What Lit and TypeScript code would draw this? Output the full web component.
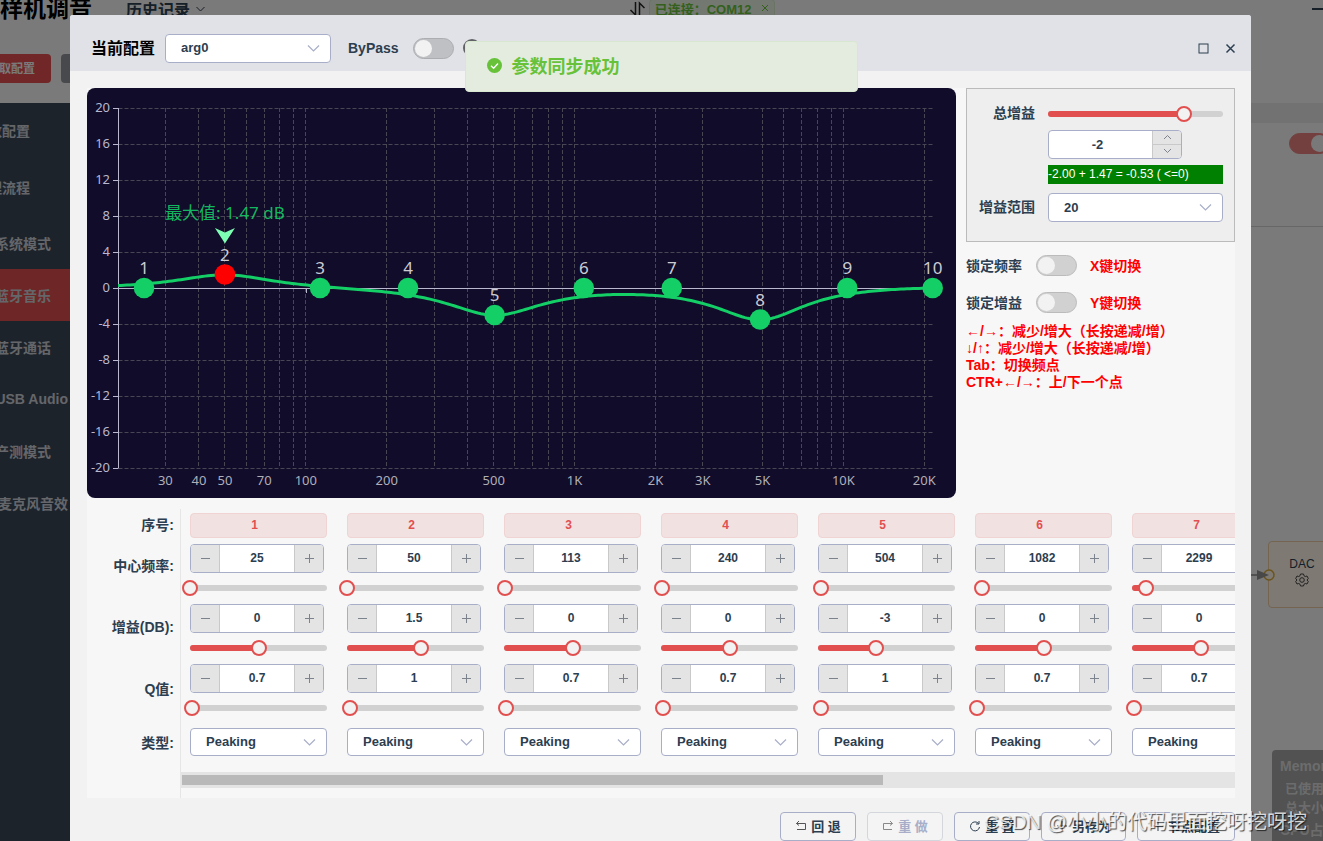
import { LitElement, html, svg, css } from "lit";
import { customElement, property } from "lit/decorators.js";
import { classMap } from "lit/directives/class-map.js";

interface Band {
  freq: number;
  gain: number;
  q: number;
}

const BANDS: Band[] = [
  { freq: 25, gain: 0, q: 0.7 },
  { freq: 50, gain: 1.5, q: 1 },
  { freq: 113, gain: 0, q: 0.7 },
  { freq: 240, gain: 0, q: 0.7 },
  { freq: 504, gain: -3, q: 1 },
  { freq: 1082, gain: 0, q: 0.7 },
  { freq: 2299, gain: 0, q: 0.7 },
  { freq: 4900, gain: -3.5, q: 1 },
  { freq: 10340, gain: 0, q: 0.7 },
  { freq: 21500, gain: 0, q: 0.7 },
];

const SAMPLE_RATE = 48000;

/** Magnitude in dB of one peaking filter at frequency f. */
function peakingDb(band: Band, f: number): number {
  if (!band.gain) return 0;
  const a = Math.pow(10, band.gain / 40);
  const w =
    Math.tan((Math.PI * f) / SAMPLE_RATE) /
    Math.tan((Math.PI * band.freq) / SAMPLE_RATE);
  const re = 1 - w * w;
  const num = re * re + Math.pow((w * a) / band.q, 2);
  const den = re * re + Math.pow(w / (a * band.q), 2);
  return 10 * Math.log10(num / den);
}

const chevron = svg`<path d="M1 1.5 L6.5 7 L12 1.5" fill="none" stroke="currentColor" stroke-width="1.2"/>`;

const shared = css`
  * {
    box-sizing: border-box;
  }
  button,
  input,
  select {
    font: inherit;
    color: inherit;
    margin: 0;
  }
  button {
    cursor: pointer;
  }
`;

@customElement("eq-slider")
export class EqSlider extends LitElement {
  @property() label = "";
  @property({ type: Number }) percent = 0;

  static styles = [
    shared,
    css`
      :host {
        display: grid;
        align-items: center;
        height: 16px;
      }
      .track {
        grid-area: 1 / 1;
        height: 6px;
        border-radius: 3px;
        background: #d1d1d1;
        overflow: hidden;
      }
      .fill {
        height: 100%;
        background: #e24f4f;
      }
      .range {
        grid-area: 1 / 1;
        appearance: none;
        background: none;
        height: 16px;
        width: calc(100% + 16px);
        margin: 0 -8px;
      }
      .range::-webkit-slider-thumb {
        appearance: none;
        box-sizing: border-box;
        width: 16px;
        height: 16px;
        border: 2px solid #e24f4f;
        border-radius: 50%;
        background: #f2f2f2;
      }
    `,
  ];

  render() {
    return html`
      <div class="track"><div class="fill" style="width:${this.percent}%"></div></div>
      <input class="range" type="range" min="0" max="100" step="any"
        .value=${String(this.percent)} aria-label=${this.label} />
    `;
  }
}

@customElement("eq-number")
export class EqNumber extends LitElement {
  @property() label = "";
  @property() value = "";
  @property({ type: Boolean }) stacked = false;

  static styles = [
    shared,
    css`
      :host {
        display: block;
      }
      .box {
        display: grid;
        grid-template-columns: 29px 1fr 29px;
        height: 29px;
        border: 1px solid #a8aec8;
        border-radius: 4px;
        background: #fff;
        overflow: hidden;
      }
      .box.stacked {
        grid-template-columns: 1fr 29px;
      }
      .field {
        width: 100%;
        min-width: 0;
        border: 0;
        padding: 0 0 2px;
        background: none;
        text-align: center;
        outline: none;
      }
      .stacked .field {
        padding: 0 6px 1px 0;
      }
      .step {
        display: grid;
        place-items: center;
        border: 0;
        padding: 0;
        background: #e4e4e4;
        color: #7d838c;
      }
      .minus {
        border-right: 1px solid #c9c9c9;
      }
      .plus {
        border-left: 1px solid #c9c9c9;
      }
      .pair {
        display: grid;
        grid-template-rows: 1fr 1fr;
        border-left: 1px solid #c9c9c9;
      }
      .up {
        border-bottom: 1px solid #c9c9c9;
      }
    `,
  ];

  render() {
    const field = html`<input class="field" type="text" inputmode="decimal"
      .value=${this.value} aria-label=${this.label} />`;
    if (this.stacked) {
      return html`<div class="box stacked">
        ${field}
        <div class="pair">
          <button class="step up" type="button" aria-label="增加">
            <svg width="9" height="6" viewBox="0 0 9 6"><path d="M1 5 L4.500 1.500 L8 5" fill="none" stroke="currentColor"/></svg>
          </button>
          <button class="step" type="button" aria-label="减少">
            <svg width="9" height="6" viewBox="0 0 9 6"><path d="M1 1 L4.500 4.500 L8 1" fill="none" stroke="currentColor"/></svg>
          </button>
        </div>
      </div>`;
    }
    return html`<div class="box">
      <button class="step minus" type="button" aria-label="减少">
        <svg width="9" height="9" viewBox="0 0 9 9"><path d="M0 4.500 H9" stroke="currentColor"/></svg>
      </button>
      ${field}
      <button class="step plus" type="button" aria-label="增加">
        <svg width="9" height="9" viewBox="0 0 9 9"><path d="M0 4.500 H9 M4.500 0 V9" stroke="currentColor"/></svg>
      </button>
    </div>`;
  }
}

@customElement("eq-select")
export class EqSelect extends LitElement {
  @property() label = "";
  @property({ type: Array }) options: string[] = [];

  static styles = [
    shared,
    css`
      :host {
        display: grid;
        align-items: center;
        height: 29px;
      }
      .control {
        grid-area: 1 / 1;
        appearance: none;
        width: 100%;
        height: 100%;
        padding: 0 30px 1px 15px;
        border: 1px solid #a8aec8;
        border-radius: 4px;
        background: #fff;
        outline: none;
      }
      .arrow {
        grid-area: 1 / 1;
        justify-self: end;
        margin-right: 11px;
        color: #a8aec8;
        pointer-events: none;
      }
    `,
  ];

  render() {
    return html`
      <select class="control" aria-label=${this.label}>
        ${this.options.map((o) => html`<option>${o}</option>`)}
      </select>
      <svg class="arrow" width="13" height="9" viewBox="0 0 13 9">${chevron}</svg>
    `;
  }
}

@customElement("eq-chart")
export class EqChart extends LitElement {
  static styles = css`
    :host {
      display: block;
      background: #100c2a;
      border-radius: 8px;
      overflow: hidden;
    }
    .plot {
      display: block;
      width: 100%;
      height: auto;
      font-family: "Noto Sans", "Noto Sans CJK SC", sans-serif;
      font-weight: 400;
    }
    .grid {
      stroke: #484653;
      stroke-dasharray: 4 2;
    }
    .axis {
      stroke: #b9b8ce;
    }
    .y-label {
      font-size: 13px;
      fill: #b9b8ce;
      text-anchor: end;
    }
    .x-label {
      font-size: 13px;
      fill: #b0afb8;
      text-anchor: middle;
    }
    .curve {
      fill: none;
      stroke: #14ce66;
      stroke-width: 3;
    }
    .dot {
      fill: #14ce66;
    }
    .dot-active {
      fill: #ff0000;
    }
    .dot-label {
      font-size: 17px;
      fill: #cccbd2;
      text-anchor: middle;
    }
    .peak {
      font-size: 17px;
      fill: #14ce66;
      fill-opacity: 0.9;
      text-anchor: middle;
    }
    .marker {
      fill: #7cffb2;
    }
  `;

  private x(f: number) {
    return 31 + 268.75 * Math.log10(f / 20);
  }

  private y(db: number) {
    return 200 - 9 * db;
  }

  private curve() {
    const right = this.x(21500);
    const parts: string[] = [];
    for (let px = 31; px <= right; px += 3) {
      const f = 20 * Math.pow(10, (px - 31) / 268.75);
      const db = BANDS.reduce((sum, b) => sum + peakingDb(b, f), 0);
      parts.push(`${px.toFixed(1)} ${this.y(db).toFixed(2)}`);
    }
    return "M" + parts.join(" L");
  }

  render() {
    const dbs = [20, 16, 12, 8, 4, 0, -4, -8, -12, -16, -20];
    const freqs = [
      30, 40, 50, 60, 70, 80, 90, 100, 200, 300, 400, 500, 600, 700, 800, 900,
      1000, 2000, 3000, 5000, 6000, 7000, 8000, 9000, 10000, 20000,
    ];
    const named = [30, 40, 50, 70, 100, 200, 500, 1000, 2000, 3000, 5000, 10000, 20000];
    const crisp = (v: number) => Math.round(v - 0.5) + 0.5;
    const peakX = this.x(50);
    return html`<svg class="plot" viewBox="0 0 869 410" role="img" aria-label="EQ">
      ${dbs.map((d) => svg`<path class="grid" d="M31.5 ${crisp(this.y(d))} H847"/>`)}
      ${freqs.map((f) => svg`<path class="grid" d="M${crisp(this.x(f))} 20 V380"/>`)}
      <path class="axis" d="M31.500 20 V380 M31.500 200.500 H847 M219.500 200 V205" fill="none"/>
      ${dbs.map((d) => svg`
        <path class="axis" d="M26 ${crisp(this.y(d))} H31.5"/>
        <text class="y-label" x="23" y=${this.y(d) + 4}>${d}</text>`)}
      ${named.map((f) => svg`
        <text class="x-label" x=${this.x(f)} y="397">${f >= 1000 ? f / 1000 + "K" : f}</text>`)}
      <path class="curve" d=${this.curve()}/>
      ${BANDS.map((b, i) => svg`
        <circle class=${i === 1 ? "dot-active" : "dot"} cx=${this.x(b.freq)} cy=${this.y(b.gain)} r="10.300"/>
        <text class="dot-label" x=${this.x(b.freq)} y=${this.y(b.gain) - 14}>${i + 1}</text>`)}
      <path class="marker" d="M${peakX} 155.500 L${peakX - 10} 140 L${peakX} 144.500 L${peakX + 10} 140 Z"/>
      <text class="peak" x=${peakX} y="131">最大值: 1.47 dB</text>
    </svg>`;
  }
}

@customElement("app-root")
export class AppRoot extends LitElement {
  static styles = [
    shared,
    css`
      :host {
        display: block;
        position: relative;
        height: 100vh;
        overflow: hidden;
        font-family: "Liberation Sans", "Noto Sans CJK SC", sans-serif;
        font-size: 14px;
        font-weight: 700;
        color: #2c3e50;
        background: #f4f4f4;
      }

      /* page behind the dialog */
      .shell {
        display: flex;
        flex-direction: column;
        height: 100%;
        margin-left: -40px;
      }
      .top {
        flex: none;
        height: 103px;
        padding-left: 40px;
      }
      .bar {
        display: flex;
        align-items: center;
        height: 18px;
        white-space: nowrap;
      }
      .brand {
        width: 126px;
        margin: 0;
        font-size: 23px;
        line-height: 20px;
        color: #000;
      }
      .history {
        display: flex;
        align-items: center;
        gap: 6px;
        width: 38%;
        font-size: 16px;
      }
      .link {
        display: flex;
        align-items: center;
        flex: 1;
        gap: 4px;
      }
      .tag {
        display: flex;
        align-items: center;
        gap: 10px;
        height: 20px;
        padding: 0 6px 2px 5px;
        border: 1px solid #d3e8c8;
        border-radius: 4px;
        background: #e6f2e0;
        color: #67c23a;
        font-size: 13px;
      }
      .window {
        margin-left: auto;
        width: 11px;
        height: 2px;
        background: #2c3e50;
      }
      .tools {
        display: flex;
        gap: 10px;
        margin: 36px 0 0 -40px;
      }
      .tool {
        width: 91px;
        height: 29px;
        border: 0;
        border-radius: 4px;
        padding: 0 16px 3px 0;
        text-align: right;
        background: #e24f4f;
        color: #f4f4f4;
        font-size: 12px;
      }
      .tool.grey {
        background: #909399;
      }
      .columns {
        display: flex;
        flex: 1;
        min-height: 0;
      }
      .side {
        width: 180px;
        background: #3b4654;
        color: #c8ccd4;
      }
      .item {
        display: flex;
        align-items: center;
        justify-content: flex-end;
        height: 52px;
        padding-right: 89px;
        padding-bottom: 1px;
        color: inherit;
        text-decoration: none;
        white-space: nowrap;
      }
      .item.head {
        height: 57px;
        padding-right: 110px;
        padding-bottom: 4px;
      }
      .item.active {
        background: #dc4c4c;
      }
      .item.wide {
        padding-right: 72px;
      }
      .work {
        display: flex;
        flex-direction: column;
        flex: 1;
      }
      .strip {
        height: 20px;
        background: #e4e4e4;
      }
      .option {
        display: flex;
        justify-content: flex-end;
        height: 104px;
        padding-top: 10px;
        border-bottom: 1px solid #cfcfcf;
      }
      .canvas {
        position: relative;
        flex: 1;
      }
      .node {
        position: absolute;
        right: -13px;
        top: 314px;
        display: flex;
        flex-direction: column;
        align-items: center;
        justify-content: center;
        gap: 2px;
        width: 68px;
        height: 67px;
        padding-bottom: 6px;
        border: 1px solid #e8c9a0;
        border-radius: 4px;
        background: #fcf3e6;
        font-size: 12px;
        font-weight: 400;
      }
      .wire {
        position: absolute;
        right: 48px;
        top: 340px;
      }
      .memory {
        position: absolute;
        right: -50px;
        bottom: -20px;
        width: 101px;
        height: 111px;
        padding: 6px 8px;
        border-radius: 4px;
        background: #a4a4a4;
        color: #d8d8d8;
        line-height: 20px;
        white-space: nowrap;
      }
      .memory-row {
        padding-left: 5px;
        font-size: 13px;
        line-height: 19px;
      }
      .memory-list {
        margin: 3px 0;
      }

      /* dialog */
      .overlay {
        position: absolute;
        inset: 0;
        padding: 15px 72px 0 70px;
        background: rgba(0, 0, 0, 0.5);
      }
      .dialog {
        height: 100%;
        border-radius: 3px 3px 0 0;
        background: #f2f2f2;
        overflow: hidden;
      }
      .head-bar {
        display: flex;
        align-items: center;
        height: 56px;
        padding: 10px 15px 0 21px;
        background: #e1e2e7;
      }
      .title {
        margin: 0 8px 0 0;
        padding-bottom: 2px;
        font-size: 16px;
        color: #000;
        flex: none;
        width: 66px;
        white-space: nowrap;
      }
      .config {
        width: 166px;
        margin-right: 17px;
        font-size: 13px;
      }
      .pass {
        display: flex;
        align-items: center;
        gap: 14px;
      }
      .help {
        width: 18px;
        height: 18px;
        margin-left: 9px;
        border-radius: 50%;
        background: #606266;
      }
      .actions {
        display: flex;
        gap: 16px;
        margin-left: auto;
      }
      .icon {
        display: grid;
        place-items: center;
        width: 11px;
        height: 12px;
        padding: 0;
        border: 0;
        background: none;
      }
      .switch {
        appearance: none;
        flex: none;
        display: flex;
        align-items: center;
        width: 41px;
        height: 21px;
        padding: 0 1px;
        border: 1px solid #bbb;
        border-radius: 11px;
        background: #d1d1d1;
      }
      .head-bar .switch {
        background: #bfc0c4;
        border-color: #acadb0;
      }
      .switch::before {
        content: "";
        width: 17px;
        height: 17px;
        border-radius: 50%;
        background: #f2f2f2;
      }
      .switch:checked {
        justify-content: flex-end;
        border-color: #e24f4f;
        background: #e24f4f;
      }
      .option .switch {
        margin-right: -7px;
        opacity: 0.7;
      }
      .content {
        margin: 17px 16px 0 17px;
        background: #f7f7f7;
      }
      .upper {
        display: flex;
        align-items: flex-start;
        gap: 10px;
      }
      .chart {
        flex: 1;
        min-width: 0;
      }
      .aside {
        width: 269px;
      }
      .panel {
        display: grid;
        grid-template-columns: 58px 1fr;
        column-gap: 13px;
        align-items: center;
        padding: 15px 11px 19px 10px;
        border: 1px solid #bbb;
        background: #eee;
      }
      .panel-label {
        padding-bottom: 2px;
        line-height: 18px;
        text-align: right;
        white-space: nowrap;
      }
      .panel-field {
        grid-column: 2;
        font-size: 13px;
      }
      .gain-number {
        width: 134px;
        margin-top: 6px;
      }
      .sum {
        height: 19px;
        margin: 6px 0 9px;
        background: #008000;
        color: #fff;
        font-size: 12px;
        font-weight: 400;
        line-height: 18px;
        white-space: nowrap;
      }
      .lock {
        display: flex;
        align-items: center;
        height: 37px;
      }
      .lock:first-of-type {
        margin-top: 5px;
      }
      .lock-label {
        width: 70px;
        padding-bottom: 2px;
      }
      .hint {
        margin-left: 13px;
        padding-bottom: 2px;
        color: #f00;
      }
      .keys {
        margin: 2px 0 0;
        color: #f00;
        line-height: 17px;
        white-space: nowrap;
      }
      .bands {
        display: flex;
        margin-top: 11px;
      }
      .names {
        flex: none;
        display: grid;
        grid-template-rows: 30px 52px 70px 54px 54px;
        align-items: center;
        justify-items: end;
        width: 94px;
        padding-right: 6px;
        border-right: 1px solid #e6e6e6;
        white-space: nowrap;
      }
      .scroller {
        flex: 1;
        min-width: 0;
        padding-bottom: 10px;
      }
      .track {
        display: flex;
        overflow: hidden;
      }
      .band {
        flex: none;
        width: 157px;
        padding: 4px 11px 16px 9px;
        font-size: 13px;
      }
      .order {
        height: 25px;
        margin-bottom: 6px;
        padding-right: 8px;
        border: 1px solid #f0d3d3;
        border-radius: 4px;
        background: #f1e1e1;
        color: #e24f4f;
        font-size: 12px;
        line-height: 22px;
        text-align: center;
      }
      .value {
        width: 134px;
        font-size: 12px;
      }
      .slide {
        margin: 7px 0 8px;
      }
      .kind {
        height: 28px;
        margin-top: 12px;
      }
      .scrollbar {
        height: 16px;
        padding: 3px 1px;
        background: #e4e4e4;
      }
      .thumb {
        height: 10px;
        background: #b9b9b9;
      }
      .foot {
        display: flex;
        justify-content: flex-end;
        gap: 11px;
        margin: 14px 16px 0 0;
      }
      .action {
        display: flex;
        align-items: center;
        justify-content: center;
        gap: 4px;
        width: 76px;
        height: 29px;
        padding: 0 0 2px;
        border: 1px solid #a8aec8;
        border-radius: 4px;
        background: #f4f4f4;
        font-size: 13px;
        white-space: nowrap;
      }
      .action.medium {
        width: 85px;
      }
      .action.large {
        width: 98px;
      }
      .action:disabled {
        border-color: #d4d6de;
        color: #a8aec8;
      }

      /* over everything */
      .toast {
        position: absolute;
        top: 41px;
        left: calc(50% - 197px);
        display: flex;
        align-items: center;
        gap: 10px;
        width: 393px;
        height: 51px;
        padding: 0 0 3px 21px;
        border: 1px solid #d8e8d0;
        border-radius: 4px;
        background: #e4ece0;
        color: #67c23a;
        font-size: 18px;
      }
      .watermark {
        position: absolute;
        right: 16px;
        bottom: 4px;
        color: rgba(255, 255, 255, 0.8);
        font-size: 20px;
        font-weight: 400;
        line-height: 30px;
        text-shadow: 1px 1px 1px rgba(0, 0, 0, 0.7);
        white-space: nowrap;
        pointer-events: none;
      }
    `,
  ];

  private renderPage() {
    const items = ["系统模式", "蓝牙音乐", "蓝牙通话", "USB Audio", "产测模式", "麦克风音效"];
    return html`<div class="shell">
      <header class="top">
        <div class="bar">
          <h1 class="brand">样机调音</h1>
          <div class="history">历史记录
            <svg width="9" height="6" viewBox="0 0 9 6"><path d="M0.500 1 L4.500 5 L8.500 1" fill="none" stroke="#2c3e50"/></svg>
          </div>
          <div class="link">
            <svg width="16" height="16" viewBox="0 0 16 16" fill="none"><path d="M6.500 1 V14 L1.500 9" stroke="#222" stroke-width="1.500"/><path d="M10.500 15 V2 L15.500 7" stroke="#222" stroke-width="1.500"/></svg>
            <span class="tag">已连接：COM12
              <svg width="6" height="6" viewBox="0 0 6 6"><path d="M0 0 L6 6 M6 0 L0 6" stroke="#67c23a"/></svg>
            </span>
            <span class="window"></span>
          </div>
        </div>
        <div class="tools">
          <button class="tool" type="button">获取配置</button>
          <button class="tool grey" type="button"></button>
        </div>
      </header>
      <div class="columns">
        <nav class="side">
          <a class="item head" href="#">参数配置</a>
          <a class="item head" href="#">处理流程</a>
          ${items.map((t, i) => html`<a href="#"
            class=${classMap({ item: true, active: i === 1, wide: i === 3 || i === 5 })}>${t}</a>`)}
        </nav>
        <div class="work">
          <div class="strip"></div>
          <div class="option"><input class="switch" type="checkbox" checked aria-label="启用" /></div>
          <div class="canvas">
            <div class="node">DAC
              <svg width="14" height="14" viewBox="0 0 14 14" fill="none" stroke="#444">
                <path d="M5.500 1 H8.500 L9 2.800 L10.300 3.500 L12 3 L13.300 5.500 L12 7 L13.300 8.500 L12 11 L10.300 10.500 L9 11.200 L8.500 13 H5.500 L5 11.200 L3.700 10.500 L2 11 L0.700 8.500 L2 7 L0.700 5.500 L2 3 L3.700 3.500 L5 2.800 Z"/>
                <circle cx="7" cy="7" r="2.300"/>
              </svg>
            </div>
            <svg class="wire" width="24" height="16" viewBox="0 0 24 16">
              <circle cx="18" cy="8" r="5" fill="#fcf3e6" stroke="#d8a838" stroke-width="1.500"/>
              <path d="M0 8 H8" stroke="#888" stroke-width="1.500"/>
              <path d="M6 3 L18 8 L6 13 Z" fill="#909090"/>
            </svg>
            <div class="memory">Memory
              <div class="memory-list">
                <div class="memory-row">已使用</div>
                <div class="memory-row">总大小</div>
              </div>
              CPU占用
            </div>
          </div>
        </div>
      </div>
    </div>`;
  }

  private renderBand(b: Band, i: number) {
    const n = i + 1;
    return html`<section class="band">
      <div class="order">${n}</div>
      <eq-number class="value" label="中心频率 ${n}" value=${b.freq}></eq-number>
      <eq-slider class="slide" label="中心频率 ${n}" percent=${((b.freq - 20) / 22000) * 100}></eq-slider>
      <eq-number class="value" label="增益 ${n}" value=${b.gain}></eq-number>
      <eq-slider class="slide" label="增益 ${n}" percent=${((b.gain + 20) / 40) * 100}></eq-slider>
      <eq-number class="value" label="Q值 ${n}" value=${b.q}></eq-number>
      <eq-slider class="slide" label="Q值 ${n}" percent=${((b.q - 0.3) / 30) * 100}></eq-slider>
      <eq-select class="kind" label="类型 ${n}" .options=${["Peaking"]}></eq-select>
    </section>`;
  }

  render() {
    return html`
      ${this.renderPage()}
      <div class="overlay">
        <main class="dialog" role="dialog" aria-label="当前配置">
          <header class="head-bar">
            <h2 class="title">当前配置</h2>
            <eq-select class="config" label="当前配置" .options=${["arg0"]}></eq-select>
            <label class="pass">ByPass <input class="switch" type="checkbox" /></label>
            <span class="help"></span>
            <div class="actions">
              <button class="icon" type="button" aria-label="最大化">
                <svg width="11" height="11" viewBox="0 0 11 11"><rect x="1" y="1" width="9" height="9" fill="none" stroke="#2c3e50"/></svg>
              </button>
              <button class="icon" type="button" aria-label="关闭">
                <svg width="11" height="11" viewBox="0 0 11 11"><path d="M1.500 1.500 L9.500 9.500 M9.500 1.500 L1.500 9.500" stroke="#2c3e50" stroke-width="1.500"/></svg>
              </button>
            </div>
          </header>
          <div class="content">
            <div class="upper">
              <eq-chart class="chart"></eq-chart>
              <aside class="aside">
                <div class="panel">
                  <span class="panel-label">总增益</span>
                  <eq-slider class="panel-field" label="总增益" percent="77.5"></eq-slider>
                  <eq-number class="panel-field gain-number" stacked label="总增益" value="-2"></eq-number>
                  <div class="panel-field sum">-2.00 + 1.47 = -0.53 ( &lt;=0)</div>
                  <span class="panel-label">增益范围</span>
                  <eq-select class="panel-field" label="增益范围" .options=${["20"]}></eq-select>
                </div>
                <label class="lock"><span class="lock-label">锁定频率</span>
                  <input class="switch" type="checkbox" /><span class="hint">X键切换</span></label>
                <label class="lock"><span class="lock-label">锁定增益</span>
                  <input class="switch" type="checkbox" /><span class="hint">Y键切换</span></label>
                <p class="keys">
                  ←/→：减少/增大（长按递减/增）<br />↓/↑：减少/增大（长按递减/增）<br />Tab：切换频点<br />CTR+←/→：上/下一个点
                </p>
              </aside>
            </div>
            <div class="bands">
              <div class="names">
                <span>序号:</span><span>中心频率:</span><span>增益(DB):</span><span>Q值:</span><span>类型:</span>
              </div>
              <div class="scroller">
                <div class="track">${BANDS.map((b, i) => this.renderBand(b, i))}</div>
                <div class="scrollbar"><div class="thumb" style="width:66.6%"></div></div>
              </div>
            </div>
          </div>
          <footer class="foot">
            <button class="action" type="button">
              <svg width="12" height="12" viewBox="0 0 12 12" fill="none" stroke="#555"><path d="M4 1 L1.500 3.500 L4 5.500 M1.500 3.500 H10.500 V9.500 H2"/></svg>回 退</button>
            <button class="action" type="button" disabled>
              <svg width="12" height="12" viewBox="0 0 12 12" fill="none" stroke="#888"><path d="M8 1 L10.500 3.500 L8 5.500 M10.500 3.500 H1.500 V9.500 H10"/></svg>重 做</button>
            <button class="action" type="button">
              <svg width="12" height="12" viewBox="0 0 12 12" fill="none" stroke="#2c3e50"><path d="M9.500 3.500 A4.500 4.500 0 1 0 10.500 7 M10 1 V4 H7"/></svg>重 置</button>
            <button class="action medium" type="button">
              <svg width="12" height="12" viewBox="0 0 12 12" fill="none" stroke="#2c3e50"><path d="M1 6 H11 M6 1 V11"/></svg>另存为</button>
            <button class="action large" type="button">
              <svg width="12" height="12" viewBox="0 0 12 12" fill="none" stroke="#2c3e50"><path d="M1 6 H11 M6 1 V11"/></svg>节点配置</button>
          </footer>
        </main>
      </div>
      <div class="toast" role="status">
        <svg width="15" height="15" viewBox="0 0 15 15"><circle cx="7.500" cy="7.500" r="7.500" fill="#67c23a"/><path d="M4 7.700 L6.600 10.200 L11 5.500" fill="none" stroke="#fff" stroke-width="1.300"/></svg>
        参数同步成功
      </div>
      <div class="watermark">CSDN @小小的代码里面挖呀挖呀挖</div>
    `;
  }
}
